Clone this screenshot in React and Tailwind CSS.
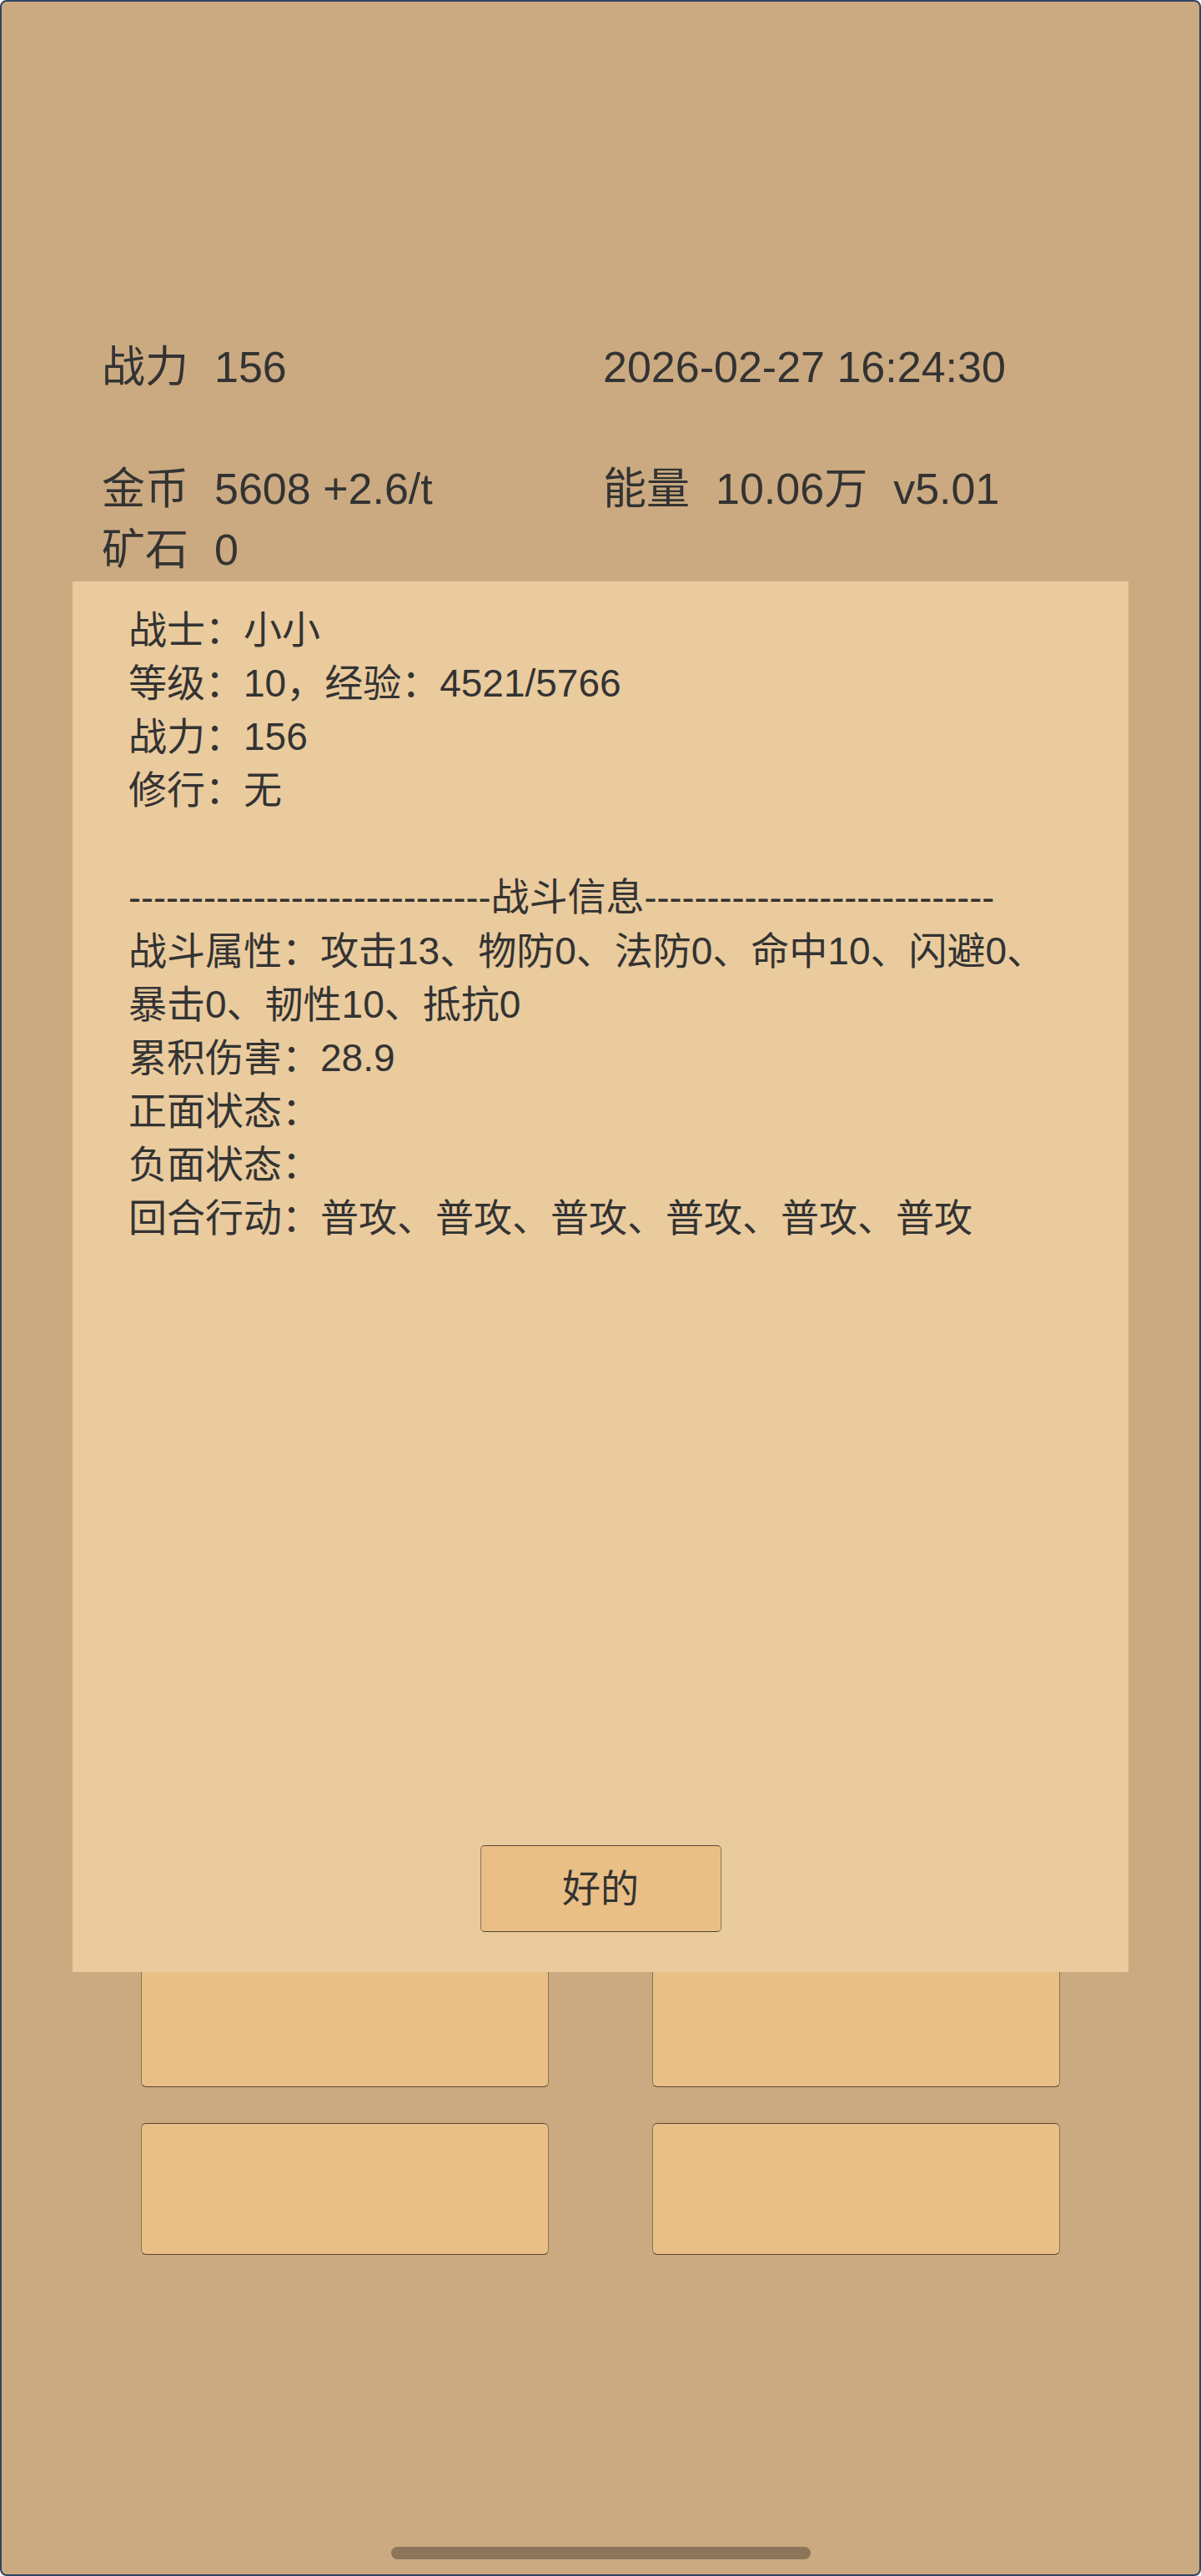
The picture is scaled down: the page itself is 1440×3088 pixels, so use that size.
import React from "react";

const font = "font-['Liberation_Sans','Noto_Sans_CJK_SC',sans-serif]";

const infoLines = [
  "战士：小小",
  "等级：10，经验：4521/5766",
  "战力：156",
  "修行：无",
  "",
];

const battleLines = [
  "战斗属性：攻击13、物防0、法防0、命中10、闪避0、暴击0、韧性10、抵抗0",
  "累积伤害：28.9",
  "正面状态：",
  "负面状态：",
  "回合行动：普攻、普攻、普攻、普攻、普攻、普攻",
];

function Stat({ label, children }) {
  return (
    <div className="flex gap-[31px] h-[73px] leading-[73px]">
      <span>{label}</span>
      {children}
    </div>
  );
}

function Card() {
  return (
    <div className="h-[158px] rounded-[6px] border border-[#8a7453] border-t-[#5a4630] border-b-[#5a4630] bg-[#e9bf85]" />
  );
}

export default function App() {
  return (
    <div
      className={`relative w-full h-[3088px] overflow-hidden rounded-[8px] border-2 border-[#2f4462] bg-[#cbaa81] text-[#333] ${font}`}
    >
      {/* stats */}
      <div className="pt-[402px] pl-[120px] grid grid-cols-[601px_1fr] text-[52px]">
        <Stat label="战力">
          <span>156</span>
        </Stat>
        <div className="h-[73px] leading-[73px]">2026-02-27 16:24:30</div>
        <div className="h-[73px]" />
        <div className="h-[73px]" />
        <Stat label="金币">
          <span>5608 +2.6/t</span>
        </Stat>
        <Stat label="能量">
          <span>10.06万</span>
          <span>v5.01</span>
        </Stat>
        <Stat label="矿石">
          <span>0</span>
        </Stat>
        <div />
      </div>

      {/* action cards */}
      <div className="mt-[1648px] ml-[167px] grid grid-cols-[489px_489px] gap-x-[124px] gap-y-[43px]">
        <Card />
        <Card />
        <Card />
        <Card />
      </div>

      <div className="mt-[350px] flex justify-center">
        <div className="w-[503px] h-[15px] rounded-full bg-[#8c7558]" />
      </div>

      {/* warrior info dialog */}
      <div className="absolute left-[85px] top-[695px] w-[1266px] h-[1667px] bg-[#eacb9e] flex flex-col">
        <div className="pt-[26px] pl-[67px] pr-[80px] text-[46px] leading-[64px]">
          {infoLines.map((line, i) => (
            <div key={i} className="min-h-[64px]">
              {line}
            </div>
          ))}
          <div className="min-h-[64px] whitespace-nowrap">
            <span className="text-[45px]">{"-".repeat(29)}</span>
            战斗信息
            <span className="text-[45px]">{"-".repeat(28)}</span>
          </div>
          {battleLines.map((line, i) => (
            <div key={i} className="min-h-[64px]">
              {line}
            </div>
          ))}
        </div>
        <button className="mt-auto mb-[48px] self-center w-[289px] h-[104px] rounded-[5px] border border-[#8a7453] border-t-[#5a4630] border-b-[#5a4630] bg-[#e9bf85] text-[46px] text-[#333]">
          好的
        </button>
      </div>
    </div>
  );
}
